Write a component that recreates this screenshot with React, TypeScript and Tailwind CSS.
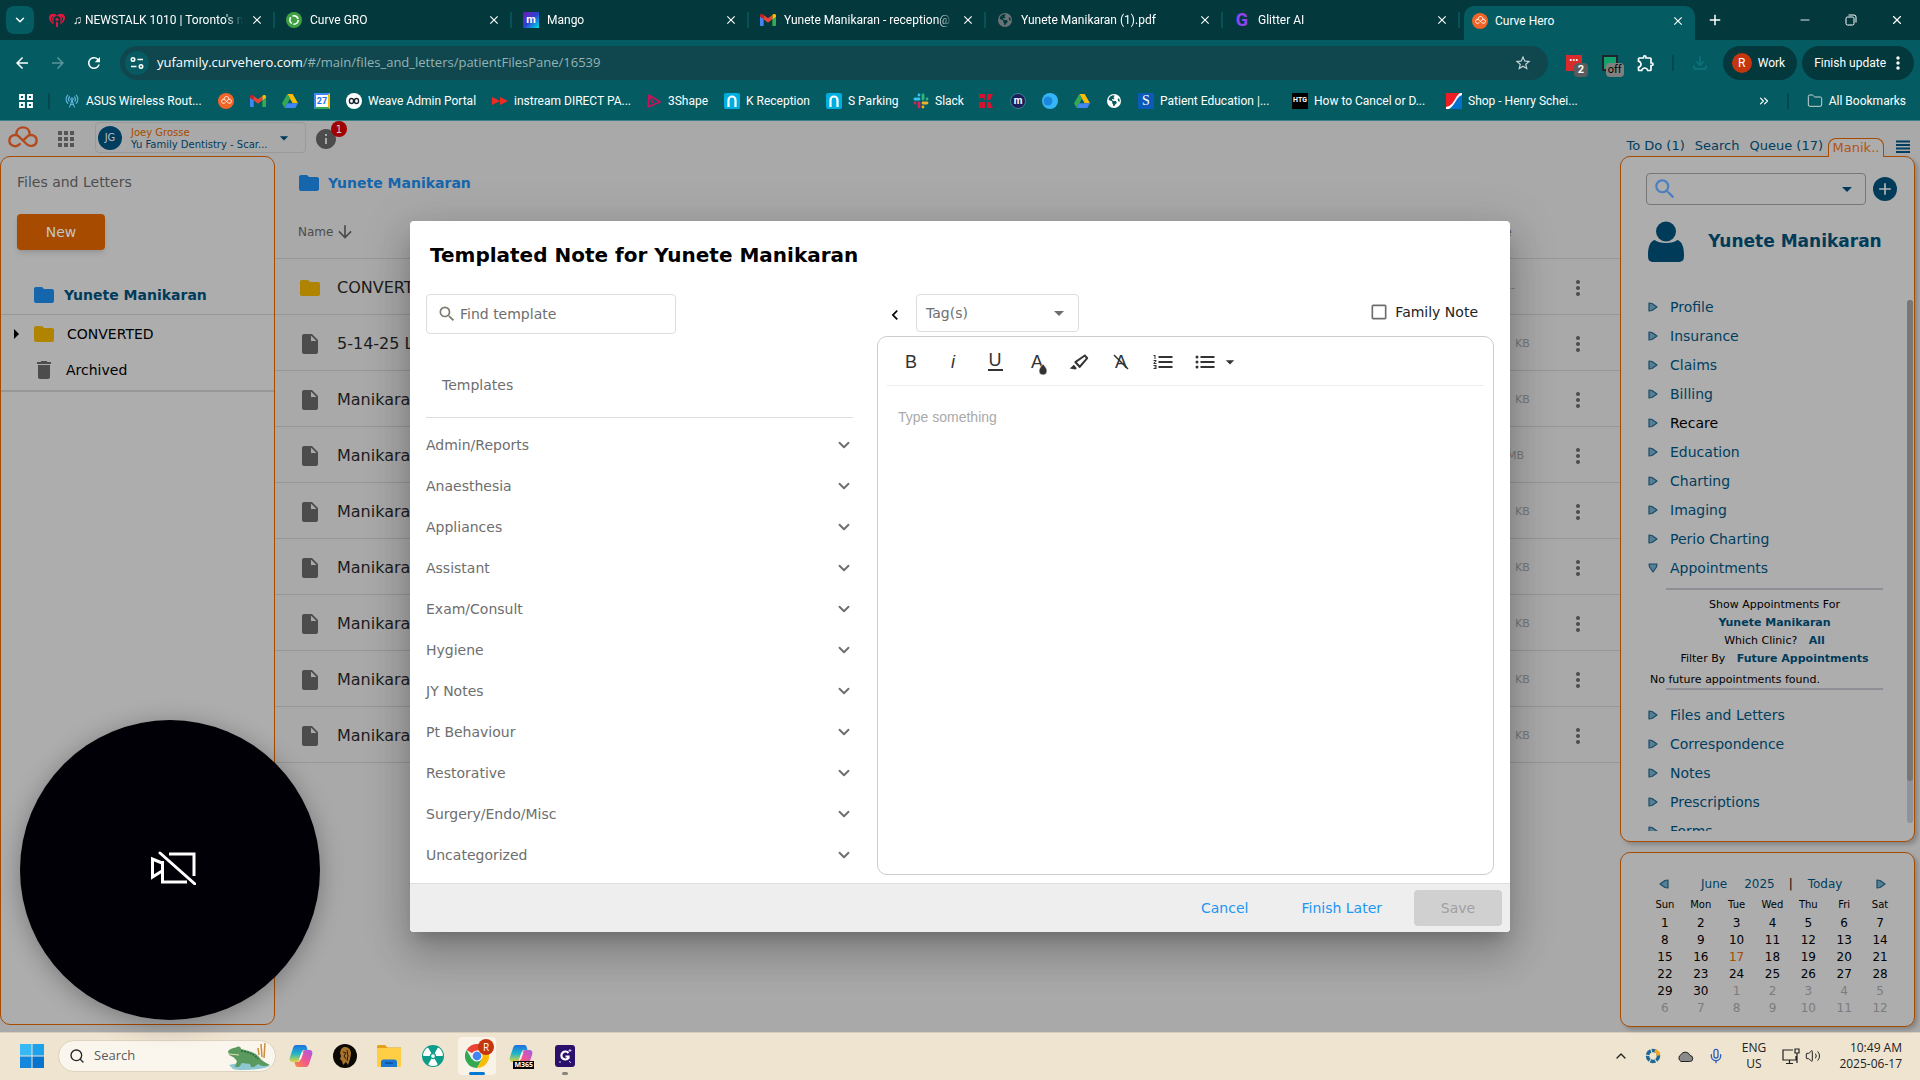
import React, { useState } from "react";
import {
    MdAdd, MdApps, MdArrowBack, MdArrowDownward, MdArrowDropDown, MdArrowForward, MdArrowRight,
    MdCheckBoxOutlineBlank, MdClose, MdDelete, MdFolder, MdInfo, MdInsertDriveFile,
    MdMoreVert, MdOutlineExtension, MdOutlineFileDownload, MdRefresh, MdSearch, MdStarBorder, MdChevronLeft,
} from "react-icons/md";
import { ChevronDown, ChevronUp, ChevronsRight, Folder, Mic, Minus, RadioTower, Search, Volume2, X } from "lucide-react";
import { FaEarthAmericas, FaRadiation } from "react-icons/fa6";

type IconProps = { className?: string }

/* ---------- logos ---------- */

function CurveMark({ className }: IconProps) {
    return (
        <svg viewBox="0 0 30 22" className={className} fill="none" stroke="currentColor" strokeWidth="2.4" strokeLinecap="round">
            <path d="M11.8 18C8.6 21.8 1.4 20.4 1.4 14.6 1.4 9 8 7.4 11.2 10.8L18.6 18c3.4 3.4 10 2 10-3.6 0-5.4-6.4-7-9.6-3.6l-3.6 3.4" />
            <path d="M8.4 7.6c.2-3.6 2.8-6.2 6.6-6.2s6.4 2.6 6.6 6.2" />
        </svg>
    )
}

function CurveBadge() {
    return (
        <span className="flex size-4 items-center justify-center rounded-full bg-[#f26529] text-white">
            <CurveMark className="w-[11px]" />
        </span>
    )
}

function GmailIcon() {
    return (
        <svg viewBox="0 0 24 18" className="w-4">
            <path d="M0 2v14.4c0 .9.7 1.6 1.6 1.6h3.900V6.500z" fill="#4285f4" />
            <path d="M24 2v14.400c0 .9-.7 1.600-1.600 1.600H18.500V6.500z" fill="#34a853" />
            <path d="M18.500 1.500v6.500L24 4V2.500C24 .2 21.500-.9 19.700.5z" fill="#fbbc04" />
            <path d="M0 2.500V4l5.500 4V1.500L4.300.5C2.500-.9 0 .2 0 2.500z" fill="#c5221f" />
            <path d="M5.500 8V1.500L12 6.400l6.500-4.900V8L12 13z" fill="#ea4335" />
        </svg>
    )
}

function DriveIcon() {
    return (
        <svg viewBox="0 0 24 21" className="w-4">
            <path d="M8 0h8l8 14h-8z" fill="#fbbc04" />
            <path d="M8 0l4 7L4 21l-4-7z" fill="#34a853" />
            <path d="M8 14h16l-4 7H4z" fill="#4285f4" />
        </svg>
    )
}

function CalendarIcon() {
    return (
        <span className="flex size-4 items-center justify-center border-2 border-[#4285f4] border-r-[#fbbc04] border-b-[#34a853] bg-white text-[9px] font-bold text-[#1a73e8]">27</span>
    )
}

function HeartRadioIcon() {
    return (
        <svg viewBox="0 0 16 16" className="size-4">
            <path d="M8 4C6.500.8 0 .6 0 5.800c0 3.700 3.500 5.700 4.500 6.700V7.500a3.500 3.500 0 017 0v5c1-1 4.500-3 4.500-6.700C16 .6 9.500.8 8 4z" fill="#e3173e" />
            <circle cx="8" cy="7.500" r="1.600" fill="#e3173e" />
            <path d="M7 10h2v5H7z" fill="#e3173e" />
            <path d="M3.500 4.500c-1.200 1.600-1.200 3.400 0 5M12.500 4.500c1.200 1.600 1.200 3.400 0 5" fill="none" stroke="#03383d" />
        </svg>
    )
}

function GroIcon() {
    return (
        <svg viewBox="0 0 16 16" className="size-4">
            <circle cx="8" cy="8" r="8" fill="#3fa142" />
            <circle cx="8" cy="8" r="4.200" fill="none" stroke="#fff" strokeWidth="1.600" strokeDasharray="7 1.800" />
        </svg>
    )
}

function ShapeIcon() {
    return (
        <svg viewBox="0 0 16 16" className="size-4" fill="none" stroke="#c8135a" strokeWidth="1.600" strokeLinejoin="round">
            <path d="M3 2l11 7-12 5zM3 2l4 8" />
        </svg>
    )
}

function ArchIcon() {
    return (
        <svg viewBox="0 0 16 16" className="size-4">
            <rect width="16" height="16" rx="2" fill="#00aee0" />
            <path d="M4.500 14V7a3.500 3.500 0 017 0v7" fill="none" stroke="#fff" strokeWidth="2.200" />
        </svg>
    )
}

function SlackIcon() {
    return (
        <svg viewBox="0 0 16 16" className="size-4" strokeWidth="2.800" strokeLinecap="round">
            <path d="M6 2h0M2 6h4" stroke="#36c5f0" />
            <path d="M10 2v4M14 6h0" stroke="#2eb67d" />
            <path d="M10 10h4M10 14h0" stroke="#ecb22e" />
            <path d="M6 10v4M2 10h0" stroke="#e01e5a" />
        </svg>
    )
}

function RedBlocksIcon() {
    return (
        <svg viewBox="0 0 16 16" className="size-4" fill="#d6122d">
            <path d="M1 1h6v6l-2-2H1zM9 1h6l-3 6H9zM1 9h6v6H1zM9 9h3l3 6H9z" />
        </svg>
    )
}

function HenryScheinIcon() {
    return (
        <svg viewBox="0 0 16 16" className="size-4">
            <path d="M0 0h16v16H0z" fill="#fff" />
            <path d="M0 0h14C9 3 8 13 0 14z" fill="#ee1c25" />
            <path d="M16 2v14H3C9 13 10 4 16 2z" fill="#0072ce" />
        </svg>
    )
}

function CopilotIcon() {
    return (
        <svg viewBox="0 0 24 24" className="size-6">
            <defs>
                <linearGradient id="copA" x1="0" y1="0" x2="0" y2="1">
                    <stop offset="0" stopColor="#1f6fe0" /><stop offset=".5" stopColor="#1fb5c9" /><stop offset="1" stopColor="#e4d43a" />
                </linearGradient>
                <linearGradient id="copB" x1="1" y1="0" x2="0" y2="1">
                    <stop offset="0" stopColor="#a15cf0" /><stop offset=".5" stopColor="#f0568f" /><stop offset="1" stopColor="#fb8a3c" />
                </linearGradient>
            </defs>
            <path d="M7 1h8c2 0 2.500 1 3 3l.5 2h-3c-2 0-2.500 1-3 3l-2 6c-.6 2-1.500 3-3 3H4c-3 0-4-2-3-5L4 4c.6-2 1.500-3 3-3z" fill="url(#copA)" />
            <path d="M17 23H9c-2 0-2.500-1-3-3l-.5-2h3c2 0 2.500-1 3-3l2-6c.6-2 1.500-3 3-3H20c3 0 4 2 3 5l-3 9c-.6 2-1.500 3-3 3z" fill="url(#copB)" />
            <path d="M12.500 8.500l-2.500 7h2l2.500-7z" fill="#fff" opacity=".8" />
        </svg>
    )
}

function ChromeIcon() {
    return (
        <svg viewBox="0 0 24 24" className="size-6">
            <path d="M12 12L1.600 6A12 12 0 0122.400 6H12z" fill="#ea4335" />
            <path d="M12 12h0L6.800 15 1.600 6A12 12 0 0012 24l5.200-9z" fill="#34a853" />
            <path d="M12 6h10.400A12 12 0 0112 24l5.200-9z" fill="#fbbc04" />
            <circle cx="12" cy="12" r="5.600" fill="#fff" />
            <circle cx="12" cy="12" r="4.400" fill="#4285f4" />
        </svg>
    )
}

function LionIcon() {
    return (
        <svg viewBox="0 0 24 24" className="size-6">
            <circle cx="12" cy="12" r="12" fill="#0b0805" />
            <path d="M12 3c4 0 6 3 6 7l-1 5-2 6-2-3-3 3-1-4-2-2 1-3-1-3c1-4 2-6 5-6z" fill="#a8742c" />
            <path d="M10 8l3 1-2 3 2 3M14 6l1 6-1 5" fill="none" stroke="#2b1a08" />
        </svg>
    )
}

function ExplorerIcon() {
    return (
        <svg viewBox="0 0 24 24" className="size-6">
            <path d="M0 2.500C0 1.700.7 1 1.500 1H8l2.500 2.500H24V8H0z" fill="#e0a21a" />
            <rect y="4" width="24" height="19" rx="1" fill="#ffce45" />
            <path d="M4 23v-5c0-1.500 1-2.500 2.500-2.500h11c1.500 0 2.500 1 2.500 2.500v5z" fill="#1a78d0" />
            <path d="M8 19h8" stroke="#0d57a5" strokeWidth="2" />
        </svg>
    )
}

function CrocodileArt() {
    return (
        <svg viewBox="0 0 44 28" className="h-7 w-11 shrink-0">
            <path d="M2 23c12-3 30-3 41 1-9 4-30 5-37 3z" fill="#8cc7d2" />
            <path d="M1 9c3-3 6-3 9-4 2-1 4 0 4 2 8 2 14 3 18 8 3 4 7 6 11 8-5 2-9 1-12-1l-4 3h-3l-1-3-8-1-3 4h-4l2-6c-2-2-2-3-4-4L2 13z" fill="#5b9a5f" />
            <path d="M14 9c7 1 13 3 17 8" fill="none" stroke="#2f6b45" strokeWidth="1.500" strokeDasharray="2 1" />
            <path d="M2 12l10 1" stroke="#e9e0b0" />
            <path d="M34 2l1 13M38 1l-1 15M31 6l1 7" stroke="#c98f3d" strokeWidth="1.500" />
        </svg>
    )
}

function GlitterTile() {
    return (
        <svg viewBox="0 0 20 22" className="h-[22px] w-5">
            <rect width="20" height="22" rx="3" fill="#2a0f6b" />
            <path d="M13.500 8A4 4 0 1013.500 13V11.500H10.500" fill="none" stroke="#fff" strokeWidth="2.200" />
            <path d="M15 4v3M13.500 5.500h3M5 16v2M14 16l2 2" stroke="#d8c5ff" />
        </svg>
    )
}

/* ---------- browser chrome ---------- */

const tabs = [
    { title: "♫ NEWSTALK 1010 | Toronto's n", icon: <HeartRadioIcon /> },
    { title: "Curve GRO", icon: <GroIcon /> },
    { title: "Mango", icon: <span className="flex size-4 items-center justify-center bg-linear-to-br from-[#6a0fb5] via-[#2a3fd0] to-[#10e0e0] text-[11px] font-bold text-white">m</span> },
    { title: "Yunete Manikaran - reception@", icon: <GmailIcon /> },
    { title: "Yunete Manikaran (1).pdf", icon: <FaEarthAmericas className="size-[14px] text-[#6b7375]" /> },
    { title: "Glitter AI", icon: <span className="flex size-4 items-center justify-center text-lg font-bold text-[#8f45f0]">G</span> },
];

const bookmarks = [
    { label: "ASUS Wireless Rout...", width: "w-[154px]", icon: <RadioTower className="size-[14px] text-[#5eb3dc]" /> },
    { label: "", width: "w-8", icon: <CurveBadge /> },
    { label: "", width: "w-8", icon: <GmailIcon /> },
    { label: "", width: "w-8", icon: <DriveIcon /> },
    { label: "", width: "w-8", icon: <CalendarIcon /> },
    { label: "Weave Admin Portal", width: "w-[146px]", icon: (
        <svg viewBox="0 0 16 16" className="size-4"><circle cx="8" cy="8" r="8" fill="#fff" /><path d="M5.500 5.500a2 2 0 00-2 2v1a2 2 0 004 0v-1a2 2 0 00-2-2zM10.500 5.500a2 2 0 00-2 2v1a2 2 0 004 0v-1a2 2 0 00-2-2z" fill="none" stroke="#1b2430" strokeWidth="1.400" /></svg>
    ) },
    { label: "instream DIRECT PA...", width: "w-[154px]", icon: (
        <svg viewBox="0 0 16 16" className="size-4" fill="#ef2b24"><path d="M0 4l8 4-8 4zM8 4l8 4-8 4z" /></svg>
    ) },
    { label: "3Shape", width: "w-[78px]", icon: <ShapeIcon /> },
    { label: "K Reception", width: "w-[102px]", icon: <ArchIcon /> },
    { label: "S Parking", width: "w-[87px]", icon: <ArchIcon /> },
    { label: "Slack", width: "w-[65px]", icon: <SlackIcon /> },
    { label: "", width: "w-8", icon: <RedBlocksIcon /> },
    { label: "", width: "w-8", icon: <span className="flex size-4 items-center justify-center rounded-full border border-[#3c7f8a] bg-[#1b1f5e] text-[10px] leading-none font-bold text-white">m</span> },
    { label: "", width: "w-8", icon: (
        <svg viewBox="0 0 16 16" className="size-4"><circle cx="8" cy="8" r="8" fill="#35b6f7" /><circle cx="6" cy="8" r="4.500" fill="#1d86dd" /></svg>
    ) },
    { label: "", width: "w-8", icon: <DriveIcon /> },
    { label: "", width: "w-8", icon: <FaEarthAmericas className="size-[14px] text-white" /> },
    { label: "Patient Education |...", width: "w-[154px]", icon: <span className="flex size-4 items-center justify-center bg-[#0a5bb8] font-['Liberation_Serif',serif] text-sm text-white">S</span> },
    { label: "How to Cancel or D...", width: "w-[154px]", icon: <span className="flex size-4 items-center justify-center bg-black text-[7px] font-bold text-white">HTG</span> },
    { label: "Shop - Henry Schei...", width: "w-[154px]", icon: <HenryScheinIcon /> },
];

function TabStrip() {
    return (
        <div className="flex h-10 items-center bg-[#03383d] pl-[6px] text-xs">
            <button type="button" aria-label="Search tabs" className="mr-1 flex size-7 items-center justify-center rounded-lg bg-[#055b62]">
                <ChevronDown className="size-[14px]" strokeWidth={2.5} />
            </button>
            {tabs.map((tab) => (
                <div key={tab.title} className="flex h-full w-[237px] items-center">
                    <span className="ml-[11px] flex size-4 shrink-0 items-center justify-center">{tab.icon}</span>
                    <span className="ml-2 w-[170px] mask-r-from-90% whitespace-nowrap">{tab.title}</span>
                    <button type="button" aria-label="Close tab" className="ml-[6px] flex size-4 items-center justify-center"><MdClose className="size-[14px]" /></button>
                    <span className="ml-auto h-4 w-[2px] bg-[#0a5058]" />
                </div>
            ))}
            <div className="mt-[6px] ml-1 flex h-[34px] w-[231px] items-center self-start rounded-t-[10px] bg-[#055b62] pb-[5px]">
                <span className="ml-2"><CurveBadge /></span>
                <span className="ml-[7px] w-[168px]">Curve Hero</span>
                <button type="button" aria-label="Close tab" className="ml-[7px] flex size-4 items-center justify-center"><MdClose className="size-[14px]" /></button>
            </div>
            <button type="button" aria-label="New tab" className="ml-[11px]"><MdAdd className="size-[18px]" /></button>
            <div className="mr-4 ml-auto flex items-center gap-[33px]">
                <button type="button" aria-label="Minimize"><Minus className="size-[14px]" strokeWidth={1.5} /></button>
                <button type="button" aria-label="Restore">
                    <svg viewBox="0 0 12 12" className="size-3" fill="none" stroke="currentColor"><rect x="1" y="3" width="8" height="8" rx="1.500" /><path d="M3.500 1H9a2 2 0 012 2v5.500" /></svg>
                </button>
                <button type="button" aria-label="Close"><X className="size-[14px]" strokeWidth={2} /></button>
            </div>
        </div>
    )
}

function AddressRow() {
    return (
        <div className="flex h-[46px] items-center pr-[6px] pl-[13px]">
            <button type="button" aria-label="Back"><MdArrowBack className="size-[18px]" /></button>
            <button type="button" aria-label="Forward" className="ml-[18px] text-[#5b949a]"><MdArrowForward className="size-[18px]" /></button>
            <button type="button" aria-label="Reload" className="mr-[17px] ml-[18px]"><MdRefresh className="size-[18px]" /></button>
            <div className="flex h-[34px] flex-1 items-center rounded-full bg-[#10474e] pl-[5px]">
                <span className="mr-2 flex size-6 items-center justify-center rounded-full bg-[#075a61]">
                    <svg viewBox="0 0 14 14" className="size-[14px]" fill="none" stroke="currentColor" strokeWidth="1.600"><circle cx="3" cy="3.500" r="1.700" /><path d="M7.500 3.500H13M1 10.500h5.500" /><circle cx="11" cy="10.500" r="1.700" /></svg>
                </span>
                <p className="flex-1 font-['Open_Sans','Noto_Sans',sans-serif] text-[13px] text-[#94b3b6]"><span className="text-white">yufamily.curvehero.com</span>/#/main/files_and_letters/patientFilesPane/16539</p>
                <button type="button" aria-label="Bookmark this tab" className="mr-4 text-[#c5d3d5]"><MdStarBorder className="size-[18px]" /></button>
            </div>
            <div className="ml-[18px] flex items-center">
                <span className="relative flex size-4 items-center justify-center bg-[#d92b2b] pb-1 text-[9px] text-white">•••
                    <span className="absolute top-2 left-2 rounded bg-[#5b5b5b] px-1 text-[11px] leading-[14px] font-bold">2</span>
                </span>
                <span className="relative ml-5 size-4 border-2 border-[#20242a] bg-[#14a06c]">
                    <span className="absolute top-[6px] left-[2px] rounded bg-[#808080] px-[2px] text-[11px] leading-[14px] text-black">off</span>
                </span>
                <button type="button" aria-label="Extensions" className="ml-[18px]"><MdOutlineExtension className="size-5" /></button>
                <span className="ml-4 h-4 w-[2px] bg-[#03484e]" />
                <span className="ml-4 text-[#0b727b]"><MdOutlineFileDownload className="size-5" /></span>
                <button type="button" className="ml-[13px] flex h-[34px] items-center gap-[6px] rounded-full bg-[#03383d] pr-3 pl-[9px] text-xs">
                    <span className="flex size-5 items-center justify-center rounded-full bg-[#c5360f]">R</span>
                    Work
                </button>
                <button type="button" className="ml-[5px] flex h-[34px] items-center rounded-full bg-[#03383d] pr-[6px] pl-3 text-xs">
                    Finish update
                    <MdMoreVert className="ml-[2px] size-5" />
                </button>
            </div>
        </div>
    )
}

function BookmarksBar() {
    return (
        <nav className="flex h-[34px] items-center pr-[14px] pb-[5px] pl-[18px] text-xs">
            <button type="button" aria-label="Apps">
                <svg viewBox="0 0 16 16" className="size-4" fill="none" stroke="currentColor" strokeWidth="1.800"><path d="M2 2h4v4H2zM10 2h4v4h-4zM2 10h4v4H2zM10 10h4v4h-4z" /></svg>
            </button>
            <span className="mr-[14px] ml-[14px] h-4 w-[2px] bg-[#03484e]" />
            {bookmarks.map((item, index) => (
                <a key={index} href="#" className={`flex shrink-0 items-center gap-[6px] whitespace-nowrap ${item.width}`}>
                    <span className="flex size-4 shrink-0 items-center justify-center">{item.icon}</span>
                    {item.label}
                </a>
            ))}
            <button type="button" aria-label="More bookmarks" className="ml-auto"><ChevronsRight className="size-[14px]" /></button>
            <span className="mr-[18px] ml-4 h-4 w-[2px] bg-[#03484e]" />
            <a href="#" className="flex items-center gap-[6px] whitespace-nowrap"><Folder className="size-4 text-[#c5d3d5]" strokeWidth={1.5} />All Bookmarks</a>
        </nav>
    )
}

/* ---------- page ---------- */

function PageHeader() {
    return (
        <header className="flex h-[35px] shrink-0 items-start pl-2">
            <a href="#" aria-label="Curve Hero" className="mt-1 text-[#b34a1e]"><CurveMark className="h-6 w-[30px]" /></a>
            <button type="button" aria-label="Apps" className="mt-[6px] ml-4 text-[#555]"><MdApps className="size-6" /></button>
            <button type="button" className="mt-px ml-[17px] flex h-[31px] w-[211px] items-center rounded border border-[#9a9a9a] pl-[2px] text-left">
                <span className="flex size-6 items-center justify-center rounded-full bg-[#003e60] text-[10px] text-[#bbb]">JG</span>
                <span className="ml-[9px] pt-[3px] text-[10px] leading-3 whitespace-nowrap">
                    <span className="block text-[#a64b00]">Joey Grosse</span>
                    <span className="block text-[#003b5a]">Yu Family Dentistry - Scar...</span>
                </span>
                <MdArrowDropDown className="mr-[11px] ml-auto size-5 shrink-0 text-[#003b5a]" />
            </button>
            <button type="button" aria-label="Notifications" className="relative mt-[6px] ml-2 text-[#4c4c4c]">
                <MdInfo className="size-6" />
                <span className="absolute -top-[6px] left-[17px] flex size-4 items-center justify-center rounded-full bg-[#a00000] text-[10px] text-[#ccc]">1</span>
            </button>
            <nav className="mr-[10px] ml-auto flex items-end self-end text-[13px] leading-4 text-[#003e60]">
                <a href="#" className="pb-[2px]">To Do (1)</a>
                <a href="#" className="ml-[10px] pb-[2px]">Search</a>
                <a href="#" className="ml-[10px] pb-[2px]">Queue (17)</a>
                <a href="#" className="relative -mb-px ml-[5px] flex h-[19px] w-14 items-center justify-center rounded-t-lg border border-b-0 border-[#a64b00] bg-[#adadad] text-[#b35510]">Manik..</a>
                <button type="button" aria-label="Menu" className="mb-[3px] ml-3">
                    <svg viewBox="0 0 14 13" className="h-[13px] w-[14px]" stroke="#003e60" strokeWidth="2"><path d="M0 1.500h14M0 5h14M0 8.500h14M0 12h14" /></svg>
                </button>
            </nav>
        </header>
    )
}

function FilesSidebar() {
    return (
        <aside className="mb-[7px] w-[275px] shrink-0 rounded-[10px] border border-[#a64b00] bg-[#adadad] text-sm text-black">
            <h2 className="pt-[15px] pl-4 text-sm leading-5 text-[#4e4e4e]">Files and Letters</h2>
            <button type="button" className="mt-[22px] ml-4 h-9 w-[88px] rounded bg-[#a64b00] text-sm text-[#c5c5c5] shadow-md">New</button>
            <a href="#" className="mt-[26px] flex h-[39px] items-center border-b border-[#979797] pl-[31px] font-bold text-[#003b5a]">
                <MdFolder className="mr-2 size-6 text-[#1666ad]" />Yunete Manikaran
            </a>
            <a href="#" className="flex h-[38px] items-center pl-[3px]">
                <MdArrowRight className="mr-1 size-6" />
                <MdFolder className="mr-[11px] size-6 text-[#b08400]" />CONVERTED
            </a>
            <a href="#" className="flex h-[39px] items-center border-b-2 border-[#979797] pb-1 pl-[31px]">
                <MdDelete className="mr-[10px] size-6 text-[#4c4c4c]" />Archived
            </a>
        </aside>
    )
}

const files = [
    { name: "CONVERTED", size: "--", sizePad: "pl-5", folder: true },
    { name: "5-14-25 L", size: "KB", sizePad: "pl-7", folder: false },
    { name: "Manikaran", size: "KB", sizePad: "pl-7", folder: false },
    { name: "Manikaran", size: "MB", sizePad: "pl-5", folder: false },
    { name: "Manikaran", size: "KB", sizePad: "pl-7", folder: false },
    { name: "Manikaran", size: "KB", sizePad: "pl-7", folder: false },
    { name: "Manikaran", size: "KB", sizePad: "pl-7", folder: false },
    { name: "Manikaran", size: "KB", sizePad: "pl-7", folder: false },
    { name: "Manikaran", size: "KB", sizePad: "pl-7", folder: false },
];

function FileTable() {
    return (
        <main className="min-w-0 flex-1">
            <a href="#" className="flex h-[54px] items-center pl-[22px] text-sm font-bold text-[#1666ad]">
                <MdFolder className="mr-[7px] size-6" />Yunete Manikaran
            </a>
            <table className="w-full table-fixed border-collapse text-left">
                <thead>
                    <tr className="h-12 border-b border-[#979797] text-xs text-[#4c4c4c]">
                        <th className="pb-1 pl-[23px] font-normal"><span className="flex items-center">Name<MdArrowDownward className="ml-[2px] size-5" /></span></th>
                        <th className="w-[79px] pb-1 font-normal">Size</th>
                        <th className="w-[54px]"></th>
                    </tr>
                </thead>
                <tbody>
                    {files.map((file, index) => (
                        <tr key={index} className="h-14 border-b border-[#979797]">
                            <td className="pt-1 pl-[23px] text-base text-[#1c1c1c]">
                                <span className="flex items-center">
                                    {file.folder
                                        ? <MdFolder className="mr-[15px] size-6 text-[#b08400]" />
                                        : <MdInsertDriveFile className="mr-[15px] size-6 text-[#4c4c4c]" />}
                                    {file.name}
                                </span>
                            </td>
                            <td className={`pt-1 text-[11px] text-[#777] ${file.sizePad}`}>{file.size}</td>
                            <td className="pt-1"><button type="button" aria-label="File actions" className="flex text-[#4c4c4c]"><MdMoreVert className="size-6" /></button></td>
                        </tr>
                    ))}
                </tbody>
            </table>
        </main>
    )
}

function Arrow({ className }: IconProps) {
    return (
        <svg viewBox="0 0 10 10" className={`size-[10px] shrink-0 ${className || ""}`} fill="#557f95" stroke="#1d4a66" strokeWidth="1.200" strokeLinejoin="round">
            <path d="M1 1l3 .5L9 5 4 8.500 1 9z" />
        </svg>
    )
}

const navTop = ["Profile", "Insurance", "Claims", "Billing", "Recare", "Education", "Charting", "Imaging", "Perio Charting", "Appointments"];
const navBottom = ["Files and Letters", "Correspondence", "Notes", "Prescriptions", "Forms"];

function NavItem({ label }: { label: string }) {
    return (
        <a href="#" className={`flex h-[29px] items-center gap-3 ${label === "Recare" ? "text-black" : "text-[#003e60]"}`}>
            <Arrow className={label === "Appointments" ? "rotate-90" : ""} />
            {label}
        </a>
    )
}

function PatientPanel() {
    return (
        <section className="flex min-h-0 flex-1 flex-col rounded-[10px] border border-[#a64b00] bg-[#adadad] shadow-[3px_3px_4px_rgba(0,0,0,0.2)]">
            <div className="mt-4 flex items-center pr-[17px] pl-[25px]">
                <label className="flex h-8 flex-1 items-center rounded border border-[#777] pr-[6px] pl-[5px]">
                    <MdSearch className="size-[26px] shrink-0 text-[#4a7fc0]" />
                    <input type="text" aria-label="Find patient" className="w-full min-w-0 bg-transparent outline-none" />
                    <MdArrowDropDown className="size-6 shrink-0 text-[#003b5a]" />
                </label>
                <button type="button" aria-label="Add patient" className="ml-[7px] flex size-6 items-center justify-center rounded-full bg-[#003b5a] text-[#b5b5b5]"><MdAdd className="size-5" /></button>
            </div>
            <div className="mt-4 flex items-center pl-[27px]">
                <svg viewBox="0 0 36 41" className="h-[41px] w-9" fill="#003b5a"><circle cx="18" cy="10.500" r="10" /><path d="M7 19c3 4 19 4 22 0 5 1 7 7 7 15 0 5-1 7-6 7H6c-5 0-6-2-6-7 0-8 2-14 7-15z" /></svg>
                <h2 className="flex-1 pr-2 text-center text-[17px] font-bold text-[#003b5a]">Yunete Manikaran</h2>
            </div>
            <div className="mt-[30px] mb-[10px] flex min-h-0 flex-1 pr-[1px] pl-[27px]">
                <div className="min-h-0 flex-1 overflow-hidden text-sm">
                    {navTop.map((label) => <NavItem key={label} label={label} />)}
                    <div className="mt-[6px] mr-6 ml-[18px] border-y-2 border-[#8f8f96] pt-[6px] text-[11px] leading-[18px] text-black">
                        <div className="text-center">
                            <p>Show Appointments For</p>
                            <p><a href="#" className="font-bold text-[#003b5a]">Yunete Manikaran</a></p>
                            <p>Which Clinic? <a href="#" className="ml-2 font-bold text-[#003b5a]">All</a></p>
                            <p className="-mx-2 whitespace-nowrap">Filter By <a href="#" className="ml-2 font-bold text-[#003b5a]">Future Appointments</a></p>
                        </div>
                        <p className="-ml-4 pt-1 leading-4 whitespace-nowrap">No future appointments found.</p>
                    </div>
                    <div className="mt-[10px]">
                        {navBottom.map((label) => <NavItem key={label} label={label} />)}
                    </div>
                </div>
                <div className="mt-[8px] mb-2 w-[6px] rounded bg-[#8e929c]"><div className="h-[92%] rounded bg-[#777]" /></div>
            </div>
        </section>
    )
}

const weekDays = ["Sun", "Mon", "Tue", "Wed", "Thu", "Fri", "Sat"];
const weeks = [0, 1, 2, 3, 4, 5].map((w) => weekDays.map((_, d) => w * 7 + d + 1));

function CalendarPanel() {
    return (
        <section className="mt-[10px] mb-[5px] h-[175px] shrink-0 rounded-[10px] border border-[#a64b00] bg-[#adadad] pt-[22px] pr-4 pl-[26px] text-black shadow-[3px_3px_4px_rgba(0,0,0,0.2)]">
            <div className="flex h-[18px] items-center px-3 text-xs text-[#003e60]">
                <button type="button" aria-label="Previous month" className="rotate-180"><Arrow /></button>
                <a href="#" className="ml-8">June</a>
                <a href="#" className="ml-[17px]">2025</a>
                <span className="ml-[14px] text-black">|</span>
                <a href="#" className="ml-[15px]">Today</a>
                <button type="button" aria-label="Next month" className="ml-auto"><Arrow /></button>
            </div>
            <table className="w-full table-fixed text-center text-xs leading-[17px]">
                <thead>
                    <tr className="h-[22px] text-[10px]">{weekDays.map((day) => <th key={day} className="font-normal">{day}</th>)}</tr>
                </thead>
                <tbody>
                    {weeks.map((week) => (
                        <tr key={week[0]}>
                            {week.map((day) => (
                                <td key={day} className={day > 30 ? "text-[#7c7c7c]" : day === 17 ? "text-[#a64b00]" : ""}>{day > 30 ? day - 30 : day}</td>
                            ))}
                        </tr>
                    ))}
                </tbody>
            </table>
        </section>
    )
}

/* ---------- dialog ---------- */

const templates = [
    "Admin/Reports", "Anaesthesia", "Appliances", "Assistant", "Exam/Consult", "Hygiene",
    "JY Notes", "Pt Behaviour", "Restorative", "Surgery/Endo/Misc", "Uncategorized",
];

const toolButton = "flex h-6 w-[42px] items-center justify-center";

function EditorToolbar() {
    return (
        <div className="mx-[9px] flex h-[49px] items-center border-b border-[#eee] pt-px pl-[3px] font-['Liberation_Sans',Arial,sans-serif] text-lg text-[#333]">
            <button type="button" aria-label="Bold" className={toolButton}>B</button>
            <button type="button" aria-label="Italic" className={`${toolButton} italic`}>i</button>
            <button type="button" aria-label="Underline" className={toolButton}><span className="border-b-2 border-[#333] px-px leading-[17px]">U</span></button>
            <button type="button" aria-label="Text color" className={toolButton}>
                <span className="relative">A
                    <svg viewBox="0 0 8 11" className="absolute right-[-4px] bottom-[1px] w-2" fill="#333" stroke="#fff" strokeWidth=".6"><path d="M4 0S0 4 0 7a4 4 0 008 0C8 4 4 0 4 0z" /></svg>
                </span>
            </button>
            <button type="button" aria-label="Background color" className={toolButton}>
                <svg viewBox="0 0 24 24" className="size-6" fill="#333"><path d="M9.920 12.240l7.750-5.390 1.180 1.300-6.100 7.200-2.830-3.110M7.590 12.650l4.530 4.990a.930.930 0 001.400-.100l7.450-8.810a.910.910 0 00.020-1.200l-2.510-2.760a.910.910 0 00-1.200-.090l-9.470 6.590a.930.930 0 00-.220 1.380zM2.790 18.530l5.620.970 1.480-1.350-3.030-3.330z" /></svg>
            </button>
            <button type="button" aria-label="Clear formatting" className={toolButton}>
                <span className="relative">A
                    <svg viewBox="0 0 16 16" className="absolute top-[6px] left-[-2px] size-4" stroke="#333" strokeWidth="1.500"><path d="M1 1l14 14" /></svg>
                </span>
            </button>
            <button type="button" aria-label="Ordered list" className={toolButton}>
                <svg viewBox="0 0 24 24" className="size-6" fill="#333"><path d="M2.500 16h2v.5h-1v1h1V18h-2v1h3V15h-3Zm1-7h1V5h-2V6h1Zm-1 2H4.300L2.500 13.100V14h3V13H3.700l1.800-2.100V10h-3Zm5-5V8h14V6Zm0 12h14V16H7.500Zm0-5h14V11H7.500Z" /></svg>
            </button>
            <button type="button" aria-label="Unordered list" className={toolButton}>
                <svg viewBox="0 0 24 24" className="size-6" fill="#333"><circle cx="4" cy="7" r="1.500" /><circle cx="4" cy="12" r="1.500" /><circle cx="4" cy="17" r="1.500" /><path d="M7.500 6v2h14V6ZM7.500 18h14v-2H7.500ZM7.500 13h14v-2H7.500Z" /></svg>
            </button>
            <button type="button" aria-label="List style" className="-ml-[6px]"><MdArrowDropDown className="size-5" /></button>
        </div>
    )
}

function NoteDialog() {

    const [search, setSearch] = useState<string>("");
    const [note, setNote] = useState<string>("");
    const [family, setFamily] = useState<boolean>(false);

    return (
        <div role="dialog" aria-labelledby="noteTitle" className="flex w-[1100px] flex-col overflow-hidden rounded bg-white text-sm text-[#6e6e6e]">
            <h1 id="noteTitle" className="pt-5 pl-5 text-xl leading-7 font-bold text-black">Templated Note for Yunete Manikaran</h1>
            <div className="mt-[25px] flex gap-6 px-4 pb-2">
                <div className="w-[427px]">
                    <label className="flex h-10 w-[250px] items-center rounded border border-[#ddd] pb-px pl-[10px]">
                        <MdSearch className="mr-[3px] size-5 text-[#7a7a70]" />
                        <input type="text"
                               aria-label="Find template"
                               placeholder="Find template"
                               value={search}
                               onChange={(e) => setSearch(e.target.value)}
                               className="w-48 outline-none placeholder:text-[#6e6e6e]" />
                    </label>
                    <h2 className="mt-[41px] pb-[22px] pl-4 leading-5">Templates</h2>
                    <ul className="border-t border-[#ddd] pt-[6px]">
                        {templates.map((name) => (
                            <li key={name}>
                                <button type="button" className="flex h-[41px] w-full items-center justify-between">
                                    {name}
                                    <ChevronDown className="size-[18px]" strokeWidth={2.5} />
                                </button>
                            </li>
                        ))}
                    </ul>
                </div>
                <div className="flex flex-1 flex-col">
                    <div className="flex h-[42px] items-start">
                        <button type="button" aria-label="Collapse" className="mt-[11px] ml-2 text-black"><MdChevronLeft className="size-5" /></button>
                        <button type="button" className="ml-[11px] flex h-[38px] w-[163px] items-center justify-between rounded border border-[#ddd] pr-[7px] pl-[9px]">
                            Tag(s)<MdArrowDropDown className="size-6" />
                        </button>
                        <label className="mt-2 mr-4 ml-auto flex items-center gap-[6px] text-[#222]">
                            <input type="checkbox" checked={family} onChange={() => setFamily(!family)} className="sr-only" />
                            <MdCheckBoxOutlineBlank className="size-5 text-[#6e6e6e]" />
                            Family Note
                        </label>
                    </div>
                    <div className="flex flex-1 flex-col rounded-[10px] border border-[#ccc]">
                        <EditorToolbar />
                        <textarea aria-label="Note"
                                  placeholder="Type something"
                                  value={note}
                                  onChange={(e) => setNote(e.target.value)}
                                  className="w-full flex-1 resize-none px-5 py-[21px] font-['Liberation_Sans',Arial,sans-serif] text-sm outline-none placeholder:text-[#aaa]" />
                    </div>
                </div>
            </div>
            <footer className="flex h-[49px] items-center justify-end border-t border-[#ddd] bg-[#eee] pr-2">
                <button type="button" className="mr-[53px] text-[#2196f3]">Cancel</button>
                <button type="button" className="mr-8 text-[#2196f3]">Finish Later</button>
                <button type="button" disabled className="h-9 w-[88px] rounded bg-[#d0d0d0] text-[#a0a0a0]">Save</button>
            </footer>
        </div>
    )
}

function CameraBubble() {
    return (
        <div className="absolute bottom-[12px] left-5 flex size-[300px] items-center justify-center rounded-full bg-[#000006] pb-1 pl-[6px] shadow-[0_4px_24px_rgba(0,0,0,0.3)]">
            <svg viewBox="0 0 46 34" className="w-[46px]" fill="none" stroke="#fff" strokeWidth="3">
                <path d="M12 12L2.500 8v18L12 20M19 3h25v22M12.500 10v21H37" />
                <path d="M10 2l35 31" strokeLinecap="round" />
            </svg>
        </div>
    )
}

/* ---------- taskbar ---------- */

function Taskbar() {
    return (
        <footer className="flex h-12 shrink-0 items-center border-t border-[#d6cdbd] bg-[#efe4d0] pb-px text-[#222]">
            <button type="button" aria-label="Start" className="ml-5">
                <svg viewBox="0 0 24 24" className="size-6"><path d="M0 0h11.500v11.500H0z" fill="#36b9f5" /><path d="M12.500 0H24v11.500H12.500z" fill="#1fa2ec" /><path d="M0 12.500h11.500V24H0z" fill="#1287dc" /><path d="M12.500 12.500H24V24H12.500z" fill="#0673cc" /></svg>
            </button>
            <label className="ml-[14px] flex h-8 w-[218px] items-center rounded-full border border-[#ddd3c0] bg-[#faf6ee] pr-1 pl-[10px]">
                <Search className="size-4 shrink-0" />
                <input type="text" aria-label="Search" placeholder="Search" className="ml-[9px] w-full min-w-0 bg-transparent text-[13px] outline-none placeholder:text-[#5a5a5a]" />
                <CrocodileArt />
            </label>
            <div className="ml-[3px] flex items-center">
                <button type="button" aria-label="Copilot" className="flex w-11 justify-center"><CopilotIcon /></button>
                <button type="button" aria-label="Lion" className="flex w-11 justify-center"><LionIcon /></button>
                <button type="button" aria-label="File Explorer" className="flex w-11 justify-center"><ExplorerIcon /></button>
                <button type="button" aria-label="Imaging" className="flex w-11 justify-center">
                    <span className="flex size-[22px] items-center justify-center rounded-full bg-[#0b9c8a]"><FaRadiation className="size-5 text-white" /></span>
                </button>
                <button type="button" aria-label="Chrome" className="relative mx-[3px] flex h-[38px] w-[38px] items-center justify-center rounded bg-[#f8f2e7]">
                    <ChromeIcon />
                    <span className="absolute top-[2px] right-[2px] flex size-4 items-center justify-center rounded-full bg-[#c5360f] text-[10px] text-white">R</span>
                    <span className="absolute bottom-0 h-[3px] w-4 rounded bg-[#0078d4]" />
                </button>
                <button type="button" aria-label="Microsoft 365 Copilot" className="relative flex w-11 justify-center">
                    <CopilotIcon />
                    <span className="absolute right-[9px] -bottom-px bg-black px-px text-[7px] leading-2 font-bold text-white">M365</span>
                </button>
                <button type="button" aria-label="Glitter" className="relative flex w-11 justify-center">
                    <GlitterTile />
                    <span className="absolute -bottom-2 h-[3px] w-[6px] rounded bg-[#8a857b]" />
                </button>
            </div>
            <div className="mr-[18px] ml-auto flex items-center text-xs leading-4">
                <ChevronUp className="size-4" />
                <svg viewBox="0 0 16 16" className="ml-4 size-4" fill="none" strokeWidth="3.500"><circle cx="8" cy="8" r="5.500" stroke="#1d6a96" strokeDasharray="5 1" /><path d="M10 2.500a6 6 0 013.500 5" stroke="#f5a623" /></svg>
                <svg viewBox="0 0 18 14" className="ml-[15px] w-[18px]"><path d="M5 12.500a4 4 0 010-7 5 5 0 019 1 3 3 0 01-.5 6z" fill="#8b8b8b" stroke="#222" /></svg>
                <Mic className="ml-[14px] size-4 text-[#2b62c0]" />
                <span className="ml-[17px] w-[26px] text-center">ENG US</span>
                <svg viewBox="0 0 18 18" className="ml-[15px] size-[18px]" fill="none" stroke="#222" strokeWidth="1.200"><path d="M11 3H1v10h13V9M7.500 13v3M4 16.500h7M13 2h4v4h-4zM15 6v10" /></svg>
                <Volume2 className="ml-[5px] size-4" strokeWidth={1.5} />
                <time className="ml-4 w-[65px] text-right whitespace-nowrap"><span className="block">10:49 AM</span>2025-06-17</time>
            </div>
        </footer>
    )
}

export default function App() {
    return (
        <div className="flex h-screen w-full flex-col overflow-hidden font-['Open_Sans','Noto_Sans',sans-serif]">
            <div className="shrink-0 border-b border-[#3a8489] bg-[#055b62] font-[Roboto,sans-serif] text-white">
                <TabStrip />
                <AddressRow />
                <BookmarksBar />
            </div>
            <div className="relative flex min-h-0 flex-1 flex-col bg-[#a9a9a9] font-['DejaVu_Sans',Verdana,sans-serif]">
                <PageHeader />
                <div className="flex min-h-0 flex-1">
                    <FilesSidebar />
                    <FileTable />
                    <aside className="mr-[5px] flex w-[295px] shrink-0 flex-col">
                        <PatientPanel />
                        <CalendarPanel />
                    </aside>
                </div>
                <CameraBubble />
                <div className="absolute inset-0 flex items-center justify-center">
                    <div className="rounded shadow-[0_11px_15px_-7px_rgba(0,0,0,0.2),0_24px_38px_3px_rgba(0,0,0,0.14),0_9px_46px_8px_rgba(0,0,0,0.12)]">
                        <NoteDialog />
                    </div>
                </div>
            </div>
            <Taskbar />
        </div>
    )
}
